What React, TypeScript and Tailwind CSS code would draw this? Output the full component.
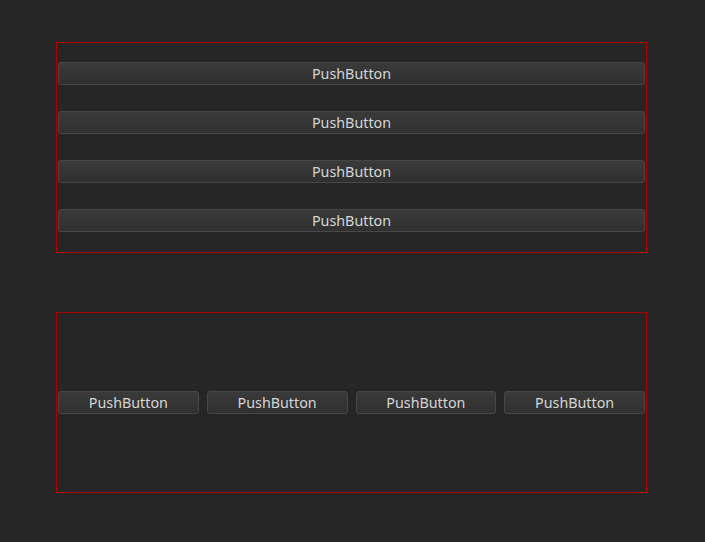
import React from 'react';

function PushButton({ className = '' }: { className?: string }) {
  return (
    <button
      className={`h-[23px] rounded-[3px] border border-[#474747] bg-gradient-to-b from-[#3a3a3a] to-[#303030] pt-[2px] text-[14.3px] leading-none text-[#d6d6d6] ${className}`}
      style={{ fontFamily: '"Noto Sans", "Open Sans", sans-serif' }}
    >
      PushButton
    </button>
  );
}

export default function App() {
  return (
    <div className="h-[542px] w-[705px] bg-[#262626] bg-[radial-gradient(circle_at_0.5px_0.5px,#1a1a1a_0.8px,transparent_0.9px)] bg-[size:10px_10px] bg-[position:6px_2px] pl-[56px] pt-[42px]">
      <div className="flex h-[211px] w-[591px] flex-col gap-[26px] border border-[#b00000] px-px pb-[20px] pt-[19px]">
        <PushButton className="w-full" />
        <PushButton className="w-full" />
        <PushButton className="w-full" />
        <PushButton className="w-full" />
      </div>
      <div className="mt-[59px] flex h-[181px] w-[591px] items-center gap-2 border border-[#b00000] px-px">
        <PushButton className="flex-1" />
        <PushButton className="flex-1" />
        <PushButton className="flex-1" />
        <PushButton className="flex-1" />
      </div>
    </div>
  );
}
